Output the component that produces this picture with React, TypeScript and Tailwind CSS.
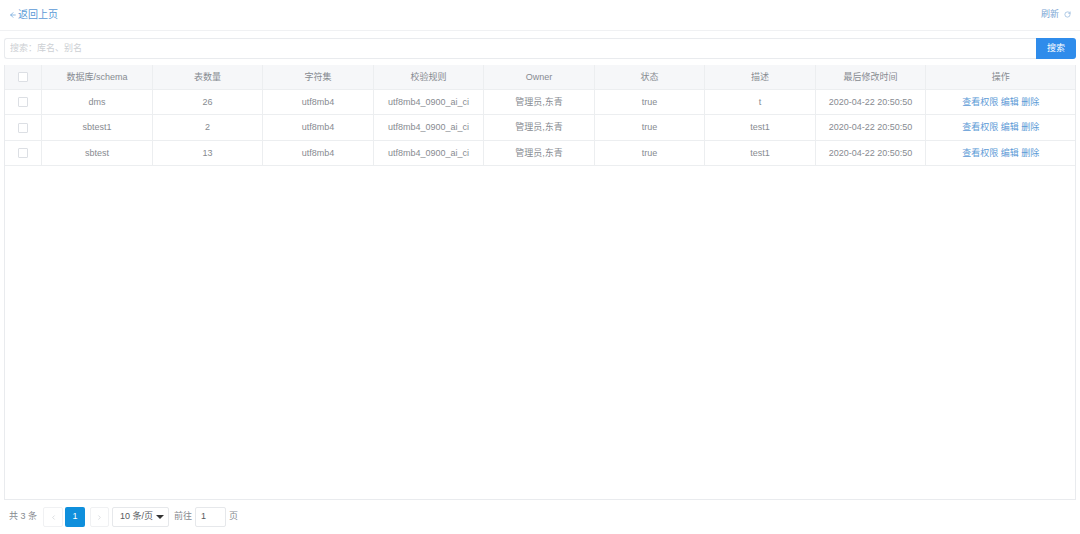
import { ChevronLeft, ChevronRight, RotateCw, ArrowLeft } from 'lucide-react';

const headers = ['数据库/schema', '表数量', '字符集', '校验规则', 'Owner', '状态', '描述', '最后修改时间', '操作'];

const rows = [
  { name: 'dms', count: '26', desc: 't' },
  { name: 'sbtest1', count: '2', desc: 'test1' },
  { name: 'sbtest', count: '13', desc: 'test1' },
];

function Checkbox() {
  return <span className="block w-[10px] h-[10px] mx-auto border border-[#dcdfe4] rounded-[1px] bg-white"></span>;
}

const colWidths = ['w-[36px]', 'w-[111px]', 'w-[110px]', 'w-[111px]', 'w-[110px]', 'w-[111px]', 'w-[110px]', 'w-[111px]', 'w-[110px]', 'w-[150px]'];

export default function App() {
  return (
    <div className="w-[1080px] h-[534px] bg-white overflow-hidden font-['Liberation_Sans','Noto_Sans_CJK_SC',sans-serif] text-[9px] text-[#878b91]">
      {/* Header */}
      <div className="h-[31px] flex items-center justify-between pl-[9px] pr-[9px] border-b border-[#f0f1f3] pb-[1px]">
        <div className="flex items-center text-[#5b9ad6] text-[10px]">
          <ArrowLeft className="w-[8px] h-[8px] mr-[1px]" />
          <span>返回上页</span>
        </div>
        <div className="flex items-center gap-[5px] text-[#7aa6d4]">
          <span>刷新</span>
          <RotateCw className="w-[7px] h-[7px]" />
        </div>
      </div>

      {/* Search */}
      <div className="flex h-[21px] mt-[7px] ml-[4px] w-[1072px]">
        <div className="flex-1 border border-[#e9ebee] border-r-0 rounded-l-[3px] flex items-center pl-[5px] text-[#cdd0d4]">
          搜索：库名、别名
        </div>
        <div className="w-[40px] bg-[#2f8ceb] rounded-r-[3px] text-white flex items-center justify-center">搜索</div>
      </div>

      {/* Table */}
      <div className="mt-[6px] ml-[4px] w-[1072px] h-[435px] border border-[#e9ebee] border-t-0 box-border">
        <table className="table-fixed border-collapse w-full">
          <colgroup>
            {colWidths.map((w, i) => (
              <col key={i} className={w} />
            ))}
          </colgroup>
          <thead>
            <tr className="h-[24px] bg-[#f6f7f9] [&>th]:pt-[1px] [&>th]:pl-[1px]">
              <th className="font-normal border-r border-b border-[#eceef0]">
                <Checkbox />
              </th>
              {headers.map((h) => (
                <th key={h} className="font-normal border-r last:border-r-0 border-b border-[#eceef0]">
                  {h}
                </th>
              ))}
            </tr>
          </thead>
          <tbody className="text-center">
            {rows.map((r) => (
              <tr key={r.name} className="h-[25.5px] [&>td]:pt-[1px] [&>td]:pl-[1px]">
                <td className="border-r border-b border-[#eceef0]">
                  <Checkbox />
                </td>
                <td className="border-r border-b border-[#eceef0]">{r.name}</td>
                <td className="border-r border-b border-[#eceef0]">{r.count}</td>
                <td className="border-r border-b border-[#eceef0]">utf8mb4</td>
                <td className="border-r border-b border-[#eceef0]">utf8mb4_0900_ai_ci</td>
                <td className="border-r border-b border-[#eceef0]">管理员,东青</td>
                <td className="border-r border-b border-[#eceef0]">true</td>
                <td className="border-r border-b border-[#eceef0]">{r.desc}</td>
                <td className="border-r border-b border-[#eceef0]">2020-04-22 20:50:50</td>
                <td className="border-b border-[#eceef0] text-[#5b9ad6]">查看权限 编辑 删除</td>
              </tr>
            ))}
          </tbody>
        </table>
      </div>

      {/* Pagination */}
      <div className="flex items-center h-[20px] mt-[7px] pl-[9px]">
        <span className="mr-[6px]">共 3 条</span>
        <span className="w-[20px] h-[20px] border border-[#f0f1f3] rounded-[2px] flex items-center justify-center text-[#c5c8cd]">
          <ChevronLeft className="w-[7px] h-[7px]" />
        </span>
        <span className="w-[20px] h-[20px] ml-[2px] bg-[#0f8fdc] rounded-[2px] text-white flex items-center justify-center">1</span>
        <span className="w-[19px] h-[20px] ml-[5px] border border-[#f0f1f3] rounded-[2px] flex items-center justify-center text-[#c5c8cd]">
          <ChevronRight className="w-[7px] h-[7px]" />
        </span>
        <span className="w-[57px] h-[20px] ml-[3px] border border-[#e6e8eb] rounded-[2px] flex items-center justify-between pl-[7px] pr-[4px] text-[#55595e]">
          <span>10 条/页</span>
          <span className="w-0 h-0 border-x-[4px] border-x-transparent border-t-[4px] border-t-[#333]"></span>
        </span>
        <span className="ml-[5px]">前往</span>
        <span className="w-[31px] h-[20px] ml-[3px] border border-[#e6e8eb] rounded-[2px] flex items-center pl-[5px] text-[#55595e]">1</span>
        <span className="ml-[3px]">页</span>
      </div>
    </div>
  );
}
